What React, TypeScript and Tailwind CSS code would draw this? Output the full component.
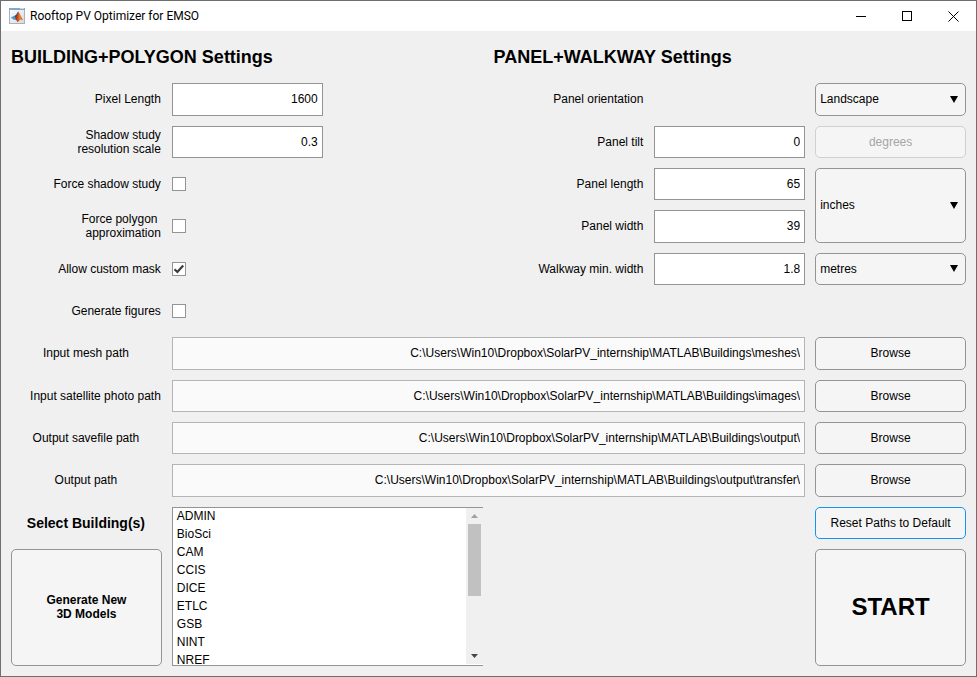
import { useState, type ReactNode } from "react";

const BUILDINGS = ["ADMIN", "BioSci", "CAM", "CCIS", "DICE", "ETLC", "GSB", "NINT", "NREF"];

const BASE = "C:\\Users\\Win10\\Dropbox\\SolarPV_internship\\MATLAB\\Buildings\\";

const PATHS = [
  { id: "mesh", label: "Input mesh path", value: BASE + "meshes\\", align: "justify-center" },
  { id: "photo", label: "Input satellite photo path", value: BASE + "images\\", align: "justify-end" },
  { id: "savefile", label: "Output savefile path", value: BASE + "output\\", align: "justify-center" },
  { id: "output", label: "Output path", value: BASE + "output\\transfer\\", align: "justify-center" },
];

function MatlabIcon() {
  return (
    <svg width="16" height="16" viewBox="0 0 16 16" aria-hidden="true">
      <defs>
        <linearGradient id="frame" x1="0" y1="0" x2="1" y2="1">
          <stop offset="0" stopColor="#ffffff" />
          <stop offset="1" stopColor="#d3d9e2" />
        </linearGradient>
        <linearGradient id="peak" x1="0" y1="0" x2="1" y2="0">
          <stop offset="0" stopColor="#6b2a1c" />
          <stop offset="0.4" stopColor="#c9441a" />
          <stop offset="0.65" stopColor="#f08a2c" />
          <stop offset="1" stopColor="#b03a17" />
        </linearGradient>
      </defs>
      <rect x="0.5" y="0.5" width="15" height="15" fill="url(#frame)" stroke="#a9b1bb" />
      <rect x="0" y="0" width="16" height="2" fill="#7fa8cc" />
      <rect x="11" y="0" width="4" height="1" fill="#c5dcf0" />
      <path d="M1.8 9.6 L5 8 L6.8 10 L4.8 11.8 Z" fill="#3f9bd2" />
      <path d="M5 8 C6.8 7.6 7.8 5.6 9.2 3.4 L8.8 8.4 L6.8 10.2 Z" fill="#24508c" />
      <path d="M9.2 3.4 C10.9 4.6 12 9.4 14.2 12 C12.6 11 11.4 11.4 10.6 12.4 C9.8 13.4 9 13.8 8 13.8 C7.6 12.2 7 11.2 4.8 11.8 C7.2 10.2 8.4 7 9.2 3.4 Z" fill="url(#peak)" />
    </svg>
  );
}

function TitleBar() {
  const control = "flex h-full w-[46px] items-center justify-center hover:bg-[#e5e5e5]";
  return (
    <header className="flex h-[30px] shrink-0 items-center bg-white pl-2">
      <MatlabIcon />
      <h1 className="ml-1 flex-1 truncate pl-px font-['Segoe_UI',Roboto,sans-serif] text-[12px] leading-4">
        Rooftop PV Optimizer for EMSO
      </h1>
      <button type="button" aria-label="Minimize" className={control}>
        <svg width="11" height="11" shapeRendering="crispEdges">
          <path d="M0 5.5H10" stroke="#000" />
        </svg>
      </button>
      <button type="button" aria-label="Maximize" className={control}>
        <svg width="11" height="11" shapeRendering="crispEdges">
          <rect x="0.5" y="0.5" width="9" height="9" fill="none" stroke="#000" />
        </svg>
      </button>
      <button type="button" aria-label="Close" className={control}>
        <svg width="11" height="11">
          <path d="M0.5 0.5L10.5 10.5M10.5 0.5L0.5 10.5" stroke="#000" />
        </svg>
      </button>
    </header>
  );
}

function Label({ htmlFor, className, children }: { htmlFor: string; className: string; children: ReactNode }) {
  return (
    <label htmlFor={htmlFor} className={"flex items-center pr-px text-right " + className}>
      {children}
    </label>
  );
}

function NumberField({ id, initial, className }: { id: string; initial: string; className: string }) {
  const [value, setValue] = useState(initial);
  return (
    <input
      id={id}
      type="text"
      inputMode="decimal"
      value={value}
      onChange={(e) => setValue(e.target.value)}
      className={"min-w-0 border border-[#949494] bg-white px-1 text-right outline-none " + className}
    />
  );
}

function CheckField({ id, initial, className }: { id: string; initial: boolean; className: string }) {
  const [on, setOn] = useState(initial);
  return (
    <span className={"grid size-[14px] self-center " + className}>
      <input
        id={id}
        type="checkbox"
        checked={on}
        onChange={(e) => setOn(e.target.checked)}
        className="col-start-1 row-start-1 size-[14px] appearance-none border border-[#949494] bg-white"
      />
      {on && (
        <svg width="14" height="14" className="pointer-events-none col-start-1 row-start-1" aria-hidden="true">
          <path d="M2.5 7.2L5.4 10L11.2 3.4" fill="none" stroke="#3c3c3c" strokeWidth="2.2" />
        </svg>
      )}
    </span>
  );
}

function Dropdown({ id, label, options, className }: { id: string; label?: string; options: string[]; className: string }) {
  return (
    <div className={"grid " + className}>
      <select
        id={id}
        aria-label={label}
        className="col-start-1 row-start-1 min-w-0 appearance-none rounded-[5px] border border-[#949494] bg-[#f5f5f5] pr-5 pl-1 outline-none"
      >
        {options.map((o) => (
          <option key={o}>{o}</option>
        ))}
      </select>
      <svg
        width="8"
        height="7"
        className="pointer-events-none col-start-1 row-start-1 mr-2 self-center justify-self-end"
        aria-hidden="true"
      >
        <path d="M0 0H8L4 7Z" fill="#000" />
      </svg>
    </div>
  );
}

function Button({ className, children, disabled }: { className: string; children: ReactNode; disabled?: boolean }) {
  return (
    <button type="button" disabled={disabled} className={"rounded-[5px] border bg-[#f5f5f5] " + className}>
      {children}
    </button>
  );
}

function BuildingList() {
  return (
    <div className="col-span-2 col-start-2 row-span-4 row-start-12 flex min-h-0 border-y border-l border-[#949494] bg-white">
      <select
        id="buildings"
        multiple
        className="h-full min-h-0 min-w-0 flex-1 appearance-none overflow-hidden pt-px outline-none"
      >
        {BUILDINGS.map((b) => (
          <option key={b} className="h-[18px] px-1 py-0 leading-[18px]">
            {b}
          </option>
        ))}
      </select>
      <div className="mb-px flex w-[17px] flex-col items-center bg-[#f0f0f0]" aria-hidden="true">
        <span className="flex h-4 shrink-0 items-center">
          <svg width="7" height="4">
            <path d="M0 4L3.5 0L7 4Z" fill="#a0a0a0" />
          </svg>
        </span>
        <span className="h-[72px] w-[13px] bg-[#c1c1c1]" />
        <span className="mt-auto flex h-4 shrink-0 items-center">
          <svg width="7" height="4">
            <path d="M0 0L3.5 4L7 0Z" fill="#454545" />
          </svg>
        </span>
      </div>
    </div>
  );
}

export default function App() {
  return (
    <div className="flex min-h-screen flex-col border border-[#6e6e6e] bg-[#f0f0f0] font-['Liberation_Sans',Arial,sans-serif] text-[12px] leading-[14px] text-black">
      <TitleBar />
      <main className="grid flex-1 grid-cols-6 grid-rows-[repeat(15,minmax(32px,1fr))] gap-[10px] p-[10px]">
        <h2 className="col-span-3 col-start-1 row-start-1 self-center text-[18px] leading-5 font-bold">
          BUILDING+POLYGON Settings
        </h2>
        <h2 className="col-span-3 col-start-4 row-start-1 self-center text-[18px] leading-5 font-bold">
          PANEL+WALKWAY Settings
        </h2>

        <Label htmlFor="pixel" className="col-start-1 row-start-2 justify-end">Pixel Length</Label>
        <NumberField id="pixel" initial="1600" className="col-start-2 row-start-2" />
        <Label htmlFor="scale" className="col-start-1 row-start-3 justify-end">
          Shadow study
          <br />
          resolution scale
        </Label>
        <NumberField id="scale" initial="0.3" className="col-start-2 row-start-3" />
        <Label htmlFor="shadow" className="col-start-1 row-start-4 justify-end">Force shadow study</Label>
        <CheckField id="shadow" initial={false} className="col-start-2 row-start-4" />
        <Label htmlFor="polygon" className="col-start-1 row-start-5 justify-end">
          <span>
            Force polygon&nbsp;
            <br />
            approximation
          </span>
        </Label>
        <CheckField id="polygon" initial={false} className="col-start-2 row-start-5" />
        <Label htmlFor="mask" className="col-start-1 row-start-6 justify-end">Allow custom mask</Label>
        <CheckField id="mask" initial={true} className="col-start-2 row-start-6" />
        <Label htmlFor="figures" className="col-start-1 row-start-7 justify-end">Generate figures</Label>
        <CheckField id="figures" initial={false} className="col-start-2 row-start-7" />

        <Label htmlFor="orientation" className="col-start-4 row-start-2 justify-end">Panel orientation</Label>
        <Dropdown id="orientation" options={["Landscape", "Portrait"]} className="col-start-6 row-start-2" />
        <Label htmlFor="tilt" className="col-start-4 row-start-3 justify-end">Panel tilt</Label>
        <NumberField id="tilt" initial="0" className="col-start-5 row-start-3" />
        <Button disabled className="col-start-6 row-start-3 border-[#d0d0d0] bg-[#f1f1f1] text-[#a6a6a6]">
          degrees
        </Button>
        <Label htmlFor="length" className="col-start-4 row-start-4 justify-end">Panel length</Label>
        <NumberField id="length" initial="65" className="col-start-5 row-start-4" />
        <Dropdown
          id="panel-unit"
          label="Panel size unit"
          options={["inches", "metres"]}
          className="col-start-6 row-span-2 row-start-4"
        />
        <Label htmlFor="width" className="col-start-4 row-start-5 justify-end">Panel width</Label>
        <NumberField id="width" initial="39" className="col-start-5 row-start-5" />
        <Label htmlFor="walkway" className="col-start-4 row-start-6 justify-end">Walkway min. width</Label>
        <NumberField id="walkway" initial="1.8" className="col-start-5 row-start-6" />
        <Dropdown
          id="walkway-unit"
          label="Walkway width unit"
          options={["metres", "inches"]}
          className="col-start-6 row-start-6"
        />

        <div className="col-span-6 row-span-4 row-start-8 grid grid-cols-subgrid grid-rows-subgrid">
          {PATHS.map((p) => (
            <div key={p.id} className="col-span-6 grid grid-cols-subgrid">
              <Label htmlFor={p.id} className={p.align}>{p.label}</Label>
              <input
                id={p.id}
                type="text"
                readOnly
                value={p.value}
                className="col-span-4 min-w-0 border border-[#b5b5b5] bg-[#fafafa] px-1 text-right outline-none"
              />
              <Button className="border-[#949494]">Browse</Button>
            </div>
          ))}
        </div>

        <Label htmlFor="buildings" className="col-start-1 row-start-12 justify-center text-[14px] leading-4 font-bold">
          Select Building(s)
        </Label>
        <BuildingList />
        <Button className="col-start-6 row-start-12 border-[#0f96f0]">Reset Paths to Default</Button>
        <Button className="col-start-1 row-span-3 row-start-13 border-[#949494] font-bold">
          Generate New
          <br />
          3D Models
        </Button>
        <Button className="col-start-6 row-span-3 row-start-13 border-[#949494] text-[24px] leading-7 font-bold">
          START
        </Button>
      </main>
    </div>
  );
}
